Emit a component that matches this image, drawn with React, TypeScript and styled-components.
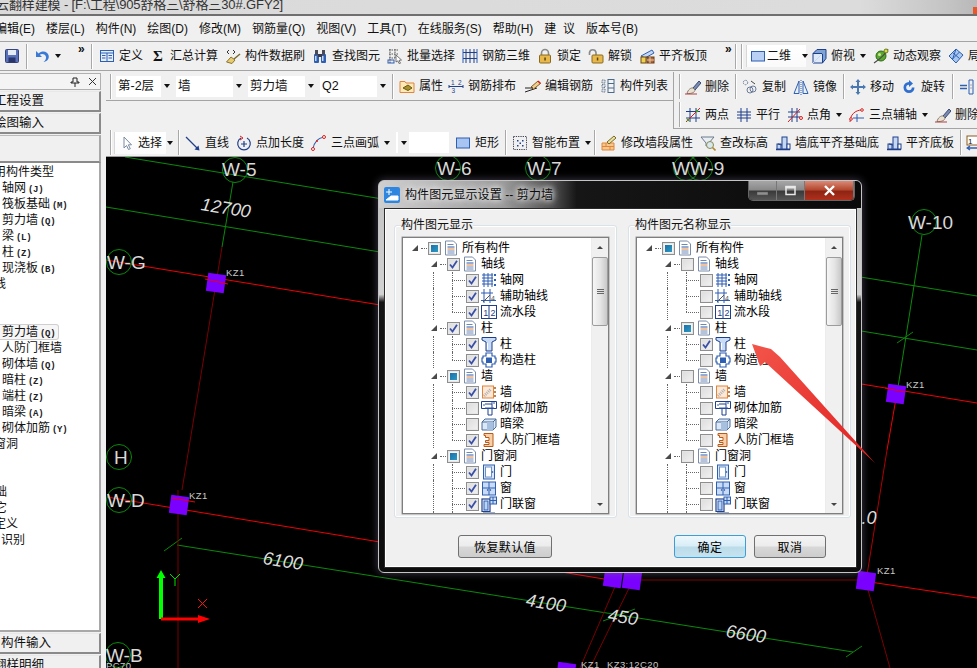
import React from 'react';
import styled, { createGlobalStyle } from 'styled-components';

const FONT = '"Liberation Sans", "Noto Sans CJK SC", sans-serif';

const Global = createGlobalStyle`
  html, body { margin: 0; padding: 0; background: #f0f0f0; overflow: hidden; }
  #root { width: 977px; height: 668px; }
`;

const Page = styled.div`
  position: relative; width: 977px; height: 668px; overflow: hidden;
  background: #f0f0f0; color: #111; font: 12px/16px ${FONT};
  display: flex; flex-direction: column;
`;
const TitleBar = styled.div`
  position: relative; height: 14px; flex: none; overflow: hidden;
  background: linear-gradient(90deg, #dadada 0, #dcdcdc 88%, #c4c4c4 97%, #b8b8b8 100%);
  border-bottom: 2px solid #6f6f6f; white-space: nowrap;
`;
const TitleText = styled.div`
  margin: -3px 0 0 -4px; font-size: 13px; line-height: 16px; color: #333; letter-spacing: -.12px;
`;
const CornerMark = styled.div`
  position: absolute; right: 0; top: 7px; width: 4px; height: 9px; background: #e8562c;
`;
const MenuBar = styled.div`
  height: 25px; flex: none; display: flex; align-items: center; gap: 11px; white-space: pre;
  border-bottom: 1px solid #a4a4a4;
`;
const MenuItem = styled.span`
  &:first-child { margin-left: -5px; }
`;
const Bar = styled.div<{ $w?: number; $h: number; $bottom?: boolean; $left?: boolean; $right?: boolean }>`
  display: flex; align-items: center; flex: ${p => (p.$w ? 'none' : '1')}; min-width: 0; overflow: hidden;
  width: ${p => (p.$w ? `${p.$w}px` : 'auto')};
  height: ${p => p.$h}px; box-sizing: border-box; white-space: nowrap;
  border-bottom: ${p => (p.$bottom ? '1px solid #a4a4a4' : '0')};
  border-left: ${p => (p.$left ? '1px solid #a4a4a4' : '0')};
  border-right: ${p => (p.$right ? '1px solid #a4a4a4' : '0')};
`;
const BarRow = styled.div`
  display: flex; flex: none;
`;
const Slot = styled.div<{ $w: number }>`
  flex: none; width: ${p => p.$w}px; display: flex; align-items: center; gap: 4px;
`;
const Spacer = styled.div<{ $w: number }>`
  flex: none; width: ${p => p.$w}px;
`;
const Pressed = styled.div<{ $w: number; $pad: number; $gap: number }>`
  flex: none; width: ${p => p.$w}px; height: 22px; box-sizing: border-box; display: flex; align-items: center;
  gap: ${p => p.$gap}px; padding-left: ${p => p.$pad}px; background: linear-gradient(#fff, #fafafa);
  border-left: 1px solid #d8d8d8;
`;
const Divider = styled.div`
  width: 1px; height: 25px; background: #a8a8a8; border-right: 1px solid #fff;
`;
const More = styled.span`
  font: 700 12px/10px ${FONT}; margin: -14px 0 0 2px; letter-spacing: -1px;
`;
const Caret = styled.span<{ $ml?: number }>`
  width: 0; height: 0; flex: none; margin-left: ${p => p.$ml ?? 1}px;
  border-left: 3.5px solid transparent; border-right: 3.5px solid transparent; border-top: 4px solid #111;
`;
const Combo = styled.div<{ $w: number }>`
  flex: none; width: ${p => p.$w}px; height: 21px; box-sizing: border-box; background: #fff; padding-left: 2px;
  display: flex; align-items: center; justify-content: space-between; font-size: 12.5px;
`;
const ComboArrow = styled.div`
  width: 11px; height: 100%; background: #f0f0f0; display: flex; align-items: center; justify-content: center;
  & > span { margin: 0; }
`;
const IconSvg = styled.svg<{ $s?: number }>`
  width: ${p => p.$s ?? 16}px; height: ${p => p.$s ?? 16}px; flex: none; display: block;
`;
const DlgIcon = styled(IconSvg)`
  margin-top: 6px;
`;
const Body = styled.div`
  display: flex; flex: 1; min-height: 0; gap: 5px;
`;

const Sidebar = styled.aside`
  width: 101px; flex: none; display: flex; flex-direction: column; padding-top: 2px; box-sizing: border-box; overflow: hidden;
`;
const DockHead = styled.div`
  height: 15px; flex: none; display: flex; align-items: center; justify-content: flex-end; gap: 8px; padding-right: 3px;
  border: 1px solid #b0b0b0; border-left: 0; background: #f4f4f4;
`;
const DockTab = styled.div<{ $x: number }>`
  height: 21px; flex: none; margin-top: 1px; box-sizing: border-box; line-height: 19px; padding-left: ${p => Math.max(p.$x, 0)}px;
  border: 1px solid #8a8a8a; border-width: 0 2px 2px 0; border-top: 1px solid #e8e8e8; background: #f0f0f0; font-size: 12.5px; overflow: hidden;
  & > span { margin-left: ${p => Math.min(p.$x, 0)}px; display: inline-block; white-space: nowrap; }
`;
const DockGap = styled.div`
  height: 28px; flex: none; margin-top: 1px; border-top: 1px solid #bbb; border-right: 2px solid #a8a8a8; border-bottom: 2px solid #8a8a8a; box-sizing: border-box;
`;
const NavList = styled.div`
  height: 469px; flex: none; box-sizing: border-box; background: #fff; border-right: 2px solid #a8a8a8; border-bottom: 2px solid #a8a8a8; padding-top: 1px; overflow: hidden;
`;
const NavRow = styled.div<{ $x: number; $sel?: boolean }>`
  height: 16px; line-height: 16px; white-space: nowrap; box-sizing: border-box; font-size: 12px;
  padding-left: ${p => (p.$x > 0 ? p.$x : 0)}px; text-indent: ${p => (p.$x < 0 ? p.$x : 0)}px;
  width: ${p => (p.$sel ? '59px' : 'auto')};
  ${p => (p.$sel ? 'background:#f6f6f6;border:1px solid #cfcfcf;border-left:0;border-radius:0 3px 3px 0;line-height:14px;padding-left:2px;' : '')}
`;
const Hotkey = styled.span`
  font: 700 9px/16px "Liberation Mono", monospace; margin-left: 2px; color: #222; letter-spacing: -.3px;
`;
const Main = styled.main`
  flex: 1; min-width: 0; display: flex; flex-direction: column; padding-top: 1px;
`;
const CanvasWrap = styled.div`
  flex: 1; min-height: 0; background: #000; overflow: hidden; border-top: 1px solid #9a9a9a;
`;
const CadSvg = styled.svg`
  display: block; width: 871px; height: 511px;
`;
const AxisLabel = styled.text`
  font: 19px "Liberation Sans", sans-serif; fill: #d8d8d8;
`;
const DimLabel = styled.text`
  font: italic 18px "Liberation Sans", sans-serif; fill: #dcdcdc;
`;
const TagLabel = styled.text`
  font: 9.5px "Liberation Sans", sans-serif; fill: #c8c8c8; letter-spacing: .4px;
`;

const Dialog = styled.section`
  position: absolute; left: 378px; top: 180px; width: 484px; height: 393px; box-sizing: border-box;
  border: 1px solid #c4c4c4; border-radius: 6px; padding: 0 4px 4px 5px; display: flex; flex-direction: column;
  background: linear-gradient(180deg, #c2c2c2 0, #d2d2d2 29%, #141414 31%, #0c0c0c 100%);
  box-shadow: 0 0 9px rgba(120,110,140,.55);
`;
const DlgTitle = styled.header`
  height: 27px; flex: none; margin: 0 -4px 0 -5px; padding: 0 6px 0 5px; display: flex; align-items: flex-start; gap: 5px;
  border-radius: 5px 5px 0 0; overflow: hidden;
  background: linear-gradient(90deg, #cfcfcf 0, #bdbdbd 10%, #9a9a9a 26%, #505050 36%, #161616 41%, #0a0a0a 100%);
`;
const DlgName = styled.div`
  margin-top: 6px; font-size: 12px; line-height: 16px; color: #0d0d0d; letter-spacing: .1px; white-space: pre;
  text-shadow: 0 0 6px #fff, 0 0 6px #ddd, 0 0 10px #ccc;
`;
const DlgBtns = styled.div`
  margin-left: auto; display: flex; height: 19px; border: 1px solid #666; border-top: 0; border-radius: 0 0 5px 5px; overflow: hidden;
`;
const WinBtn = styled.div<{ $w: number; $red?: boolean }>`
  width: ${p => p.$w}px; display: flex; align-items: center; justify-content: center; border-right: 1px solid #777;
  background: ${p => (p.$red
    ? 'linear-gradient(#d98a78 0, #b54a30 45%, #8e2414 55%, #b0301c 100%)'
    : 'linear-gradient(#a6a6a6 0, #8a8a8a 45%, #3a3a3a 55%, #565656 100%)')};
`;
const Client = styled.div`
  flex: 1; min-height: 0; background: #f0f0f0; border: 1px solid #2a2a2a; outline: 0; box-shadow: inset 0 0 0 1px #fff;
  padding: 9px 4px 0 9px; box-sizing: border-box; display: flex; flex-direction: column;
`;
const Groups = styled.div`
  display: flex; gap: 11px;
`;
const Group = styled.fieldset`
  margin: 0; width: 223px; height: 300px; box-sizing: border-box; border: 1px solid #d9e2e8; border-radius: 3px; box-shadow: inset 0 0 0 1px #fff;
  padding: 0 7px 3px; display: flex; min-width: 0;
`;
const Legend = styled.legend`
  padding: 0; margin-left: -1px; font-size: 12px; line-height: 14px; background: #f0f0f0;
`;
const TreeBox = styled.div`
  flex: 1; min-width: 0; display: flex; margin-top: 5px; background: #fff; border: 1px solid #7e7e7e; box-shadow: 0 0 0 .5px #9a9a9a; overflow: hidden;
`;
const TreeRows = styled.div`
  flex: 1; min-width: 0; padding-top: 2px; overflow: hidden;
`;
const TreeRow = styled.div<{ $lv: number; $guide?: boolean }>`
  position: relative; height: 16px; display: flex; align-items: center; padding-left: ${p => p.$lv * 19}px; white-space: nowrap;
  ${p => (p.$guide ? `&::before{content:'';position:absolute;left:30px;top:0;bottom:0;border-left:1px dotted #666;}` : '')}
`;
const Twist = styled.div`
  position: relative; width: 25px; height: 16px; flex: none;
  &::before { content: ''; position: absolute; left: 9px; top: 5px; width: 0; height: 0;
    border-left: 6px solid transparent; border-bottom: 6px solid #4a4a4a; }
  &::after { content: ''; position: absolute; left: 18px; top: 8px; width: 6px; border-top: 1px dotted #666; }
`;
const Elbow = styled.div<{ $last?: boolean }>`
  position: relative; width: 25px; height: 16px; flex: none;
  &::before { content: ''; position: absolute; left: 11px; top: 0; height: ${p => (p.$last ? '8px' : '16px')}; border-left: 1px dotted #666; }
  &::after { content: ''; position: absolute; left: 11px; top: 8px; width: 13px; border-top: 1px dotted #666; }
`;
const Check = styled.div<{ $state: 'on' | 'off' | 'mixed' }>`
  position: relative; width: 13px; height: 13px; flex: none; box-sizing: border-box; border: 1px solid #8e8e8e; margin-right: 2px;
  box-shadow: inset 0 0 0 1px #e6e6e6; display: flex; align-items: center; justify-content: center;
  background: ${p => (p.$state === 'mixed'
    ? 'linear-gradient(135deg, #1f6fa8, #2a9ac4) 2px 2px / 7px 7px no-repeat, #f4f4f4'
    : 'linear-gradient(135deg, #dcdcdc, #f2f2f2)')};
`;
const TreeText = styled.span`
  margin-left: 3px; font-size: 12px; line-height: 16px; color: #000;
`;
const ScrollTrack = styled.div`
  width: 16px; flex: none; display: flex; flex-direction: column; align-items: stretch; background: #f0f0f0; border-left: 1px solid #ececec;
`;
const ScrollArrow = styled.div<{ $down?: boolean }>`
  height: 18px; flex: none; display: flex; align-items: center; justify-content: center;
  &::before { content: ''; width: 0; height: 0; border-left: 3.5px solid transparent; border-right: 3.5px solid transparent;
    ${p => (p.$down ? 'border-top: 3.5px solid #444;' : 'border-bottom: 3.5px solid #444;')} }
`;
const ScrollThumb = styled.div`
  height: 69px; margin: 1px 0 auto; box-sizing: border-box; border: 1px solid #9c9c9c; border-radius: 2px;
  background: linear-gradient(90deg, #f6f6f6, #e4e4e4 55%, #c8c8c8); display: flex; flex-direction: column; align-items: center; justify-content: center; gap: 1px;
`;
const ThumbLine = styled.i`
  display: block; width: 7px; height: 1px; background: #666;
`;
const Footer = styled.div`
  display: flex; padding: 17px 0 0 64px;
`;
const Btn = styled.button<{ $w: number; $focus?: boolean; $ml?: number }>`
  width: ${p => p.$w}px; height: 23px; padding: 0; margin-left: ${p => p.$ml ?? 0}px; box-sizing: border-box; border-radius: 3px; font: 12px ${FONT}; letter-spacing: .4px; color: #000;
  border: 1px solid ${p => (p.$focus ? '#3c9ed4' : '#707070')};
  background: ${p => (p.$focus
    ? 'linear-gradient(#eef8fd 0, #d8edf7 48%, #bcdcea 52%, #c6e2ee 100%)'
    : 'linear-gradient(#f4f4f4 0, #ececec 48%, #d8d8d8 52%, #cdcdcd 100%)')};
`;
const ArrowOverlay = styled.svg`
  position: absolute; left: 0; top: 0; width: 977px; height: 668px; pointer-events: none;
`;

const BL = '#2f5fb0', DB = '#1f3f8c', LB = '#c4d8f4', OR = '#e0853a', RD = '#d62020', GD = '#e8b84a';
const ICONS: Record<string, React.ReactNode> = {
  save: <><rect x="1.5" y="1.5" width="13" height="13" rx="1" fill="#5a70b8" stroke="#34447c" /><rect x="4" y="2" width="8" height="5" fill="#e6ecf6" /><rect x="4.5" y="9.5" width="7" height="5" fill="#28346c" /></>,
  undo: <path d="M2 3v6h6L5.8 6.8c2-1.6 5-.8 6 1.4 .8 2-.2 4.4-2.3 5.8 3.4-.4 5.8-3 5.2-6.2C14 3.600 8.600 1.600 4.600 5.400z" fill="#3a7ad6" />,
  define: <><rect x="1.500" y="2.500" width="13" height="11" fill="#e6eefa" stroke={BL} /><path d="M1.500 5h13M8 5v8.500M3 7.500h3.500M3 10h3.500M9.500 7.500h3.500M9.500 10h3.500" stroke={BL} fill="none" /></>,
  sigma: <text x="8" y="13" textAnchor="middle" fontSize="15" fontWeight="700" fontFamily="Liberation Serif" fill="#111">Σ</text>,
  brush: <><path d="M2 4l2-2M2 4l2 2M8 2l2 2-2 2" stroke="#333" fill="none" /><path d="M15 6L9 11" stroke="#7a6a30" strokeWidth="1.500" /><path d="M6 9l4 3-3 3.500L1.500 14z" fill="#e8cc70" stroke="#8a7430" /></>,
  binoc: <><rect x="2" y="6" width="5" height="9" rx="1" fill={BL} /><rect x="9" y="6" width="5" height="9" rx="1" fill={BL} /><rect x="3" y="2" width="3" height="5" fill="#4a4a58" /><rect x="10" y="2" width="3" height="5" fill="#4a4a58" /><rect x="6" y="6" width="4" height="3" fill="#3a3a48" /><rect x="3" y="8" width="1.500" height="5" fill={LB} /><rect x="10" y="8" width="1.500" height="5" fill={LB} /></>,
  batch: <><path d="M2 2h10M2 6h9M2 10h6M3 1v14M8 1v9" stroke="#555" strokeDasharray="1.500 1" fill="none" /><rect x="1" y="12" width="6" height="3" fill="none" stroke={BL} /><path d="M9 7l5.500 5-2.500.4 1.500 2.800-1.300.5-1.400-2.800L9 14z" fill="#fff" stroke="#555" strokeWidth=".8" /></>,
  rebar: <><path d="M1 4.500h14M1 10.500h14M4 1v14M8 1v14M12 1v14" stroke={DB} fill="none" /><path d="M1 1v14M15 1v14" stroke={BL} fill="none" /></>,
  lock: <><path d="M4.500 7V5a3.500 3.500 0 0 1 7 0v2" fill="none" stroke="#8a8a8a" strokeWidth="1.600" /><rect x="2.500" y="7" width="11" height="8" rx="1" fill={GD} stroke="#8a6a20" /><rect x="7.300" y="9.500" width="1.500" height="3" fill="#5a4210" /></>,
  unlock: <><path d="M1.500 7V4.500a3.300 3.300 0 0 1 6.500 0V7" fill="none" stroke="#8a8a8a" strokeWidth="1.600" /><rect x="4" y="7" width="11" height="8" rx="1" fill={GD} stroke="#8a6a20" /><rect x="8.800" y="9.500" width="1.500" height="3" fill="#5a4210" /></>,
  levelTop: <><path d="M2 8L13 2l2 3-9 5z" fill={LB} stroke={BL} /><rect x="2" y="9" width="5" height="6" fill="#f0d050" stroke="#6a4a10" /><rect x="8" y="9" width="7" height="6" fill="#b06a3a" stroke="#6a3a10" /><path d="M8 12h7M11 9v6" stroke="#e8c8a8" /></>,
  rect2d: <rect x="1.500" y="3.500" width="13" height="9.500" fill="#b8d0f4" stroke={BL} />,
  cube: <><path d="M2 5.500h9.500v9.500H2z" fill="#dfeaf8" stroke={DB} /><path d="M2 5.500L6 1.500h9v9l-3.500 4.500V5.500z" fill="#7fa4d4" stroke={DB} /><path d="M2 15l9.500-9.500" stroke={LB} /></>,
  orbit: <><circle cx="8" cy="8" r="5" fill="#5aa82e" stroke="#2e6a12" /><circle cx="6.500" cy="6.500" r="1.500" fill="#c8e89a" /><path d="M1 15C4 13 12 7 15 1" stroke="#4a4a4a" strokeWidth="1.200" fill="none" /><circle cx="13" cy="3" r="2" fill="#d8e040" stroke="#6a7a20" /></>,
  layers: <><path d="M1 8L8 1l7 6-7 8z" fill="#a8c8f0" stroke={BL} /><path d="M4.500 4.500l7 6M8 1l-3.500 10.500M11.500 4l-7 7" stroke={BL} fill="none" /></>,
  attr: <><path d="M1 3.500h5l1 1.500h8v9.500H1z" fill="#fde8b8" stroke={OR} /><path d="M4 10l5-3 4 3-4 2.500z" fill="#a89030" stroke="#6a5a10" /></>,
  layout: <><text x="3" y="6.500" fontSize="6.500" fill={DB} fontFamily="Liberation Sans">1</text><text x="10" y="6.500" fontSize="6.500" fill={DB} fontFamily="Liberation Sans">2</text><text x="3.500" y="15" fontSize="6.500" fill={DB} fontFamily="Liberation Sans">3</text><path d="M1 8.500h14M1 7v3M15 7v3" stroke={DB} fill="none" /></>,
  edit: <><path d="M0 14l6-2 6-2" stroke="#222" fill="none" /><path d="M6 9l7-6 2.500 2.500-7 5.500z" fill="#f0d090" stroke="#8a5a20" /><path d="M13 3l2.500 2.500" stroke={RD} strokeWidth="1.500" /><path d="M0 10h8" stroke="#222" /></>,
  list: <><path d="M2 2h3v3H2zM2 6.500h3v3H2zM2 11h3v3H2z" fill="#dfe6ee" stroke="#6a7a8a" strokeDasharray="1 .5" /><rect x="8" y="1.500" width="6" height="13" fill="#f4f4f4" stroke="#4a6a8a" /><path d="M8 5.500h6M8 10h6" stroke="#4a6a8a" /></>,
  eraser: <><path d="M8 9l6-7 2 2-6 7z" fill="#7a8ab0" stroke="#3a4a70" /><path d="M2 14.500c1-4 4-6 6-5.500l2 2c0 2-3 4-8 3.500z" fill="#e8e0d0" stroke="#8a8070" /><path d="M0 15h12" stroke="#b04040" /></>,
  copy: <><circle cx="3.500" cy="3.500" r="2.200" fill="none" stroke="#6a7a9a" strokeDasharray="1.500 .8" /><circle cx="8" cy="11" r="3" fill="none" stroke="#6a7a9a" /><circle cx="11" cy="10" r="3" fill="none" stroke="#6a7a9a" /><path d="M9 2l4 3" stroke="#444" /></>,
  mirror: <><path d="M1 14.500L6 2v12.500z" fill="#e8f0fa" stroke={BL} /><path d="M15 14.500L10 2v12.500z" fill="#e8f0fa" stroke={BL} /><path d="M8 1v15" stroke={BL} strokeDasharray="1 1" /></>,
  move: <path d="M8 0l2.500 3H9v4h4V5.500L16 8l-3 2.500V9H9v4h1.500L8 16l-2.500-3H7V9H3v1.500L0 8l3-2.500V7h4V3H5.500z" fill="#4a78b0" />,
  rotate: <path d="M8 3a5.500 5.500 0 1 0 5.500 5.500h-2.700A2.800 2.800 0 1 1 8 5.700V8l4-3.500L8 1z" fill="#2f6fd0" />,
  align: <><path d="M1 6.500h7M1 9.500h7" stroke={BL} strokeWidth="1.300" /><path d="M10 1v14M14 1v14M10 1h4M10 15h4" stroke={BL} fill="none" /><path d="M11.500 6h1M11.500 9h1" stroke="#666" /></>,
  twoPts: <><path d="M5 1v14M11 1v14M1 4.500h14M1 11h14" stroke={DB} fill="none" /><path d="M1 15L15 1" stroke={RD} /><circle cx="3" cy="13" r="1.300" fill="#4a9a20" /><circle cx="12" cy="4" r="1.300" fill="#4a9a20" /></>,
  parallel: <path d="M1 5h14M1 8h14M1 11h14M5 1v14M11 1v14" stroke={DB} fill="none" />,
  angle: <><path d="M5 1v14M10 1v14M1 5h12M1 10h12" stroke={DB} fill="none" /><path d="M1 15L13 2" stroke={RD} /><circle cx="14" cy="11" r="1.500" fill="none" stroke={RD} /></>,
  threeAxis: <><path d="M1 15c0-7 5-12 12-12" stroke={RD} fill="none" /><path d="M8 7v8M4 11h11" stroke={BL} fill="none" /><circle cx="2" cy="12" r="1.300" fill="#fff" stroke={RD} /><circle cx="13" cy="3" r="1.300" fill="#fff" stroke={RD} /></>,
  select: <path d="M5 2v11l2.500-2.500 2 4 1.800-.8-2-3.900H12.500z" fill="#fff" stroke="#7a8aa0" />,
  line: <><path d="M1 2l12 12" stroke={DB} strokeWidth="1.200" /><path d="M14.500 15.500l-1-5-4 4z" fill={DB} /></>,
  ptLen: <><path d="M5 3a6.300 6.300 0 1 0 6 0" fill="none" stroke={DB} strokeWidth="1.200" /><path d="M8 6v6M5 9h6" stroke={DB} strokeWidth="1.200" /><path d="M4 1l3 2-3 2" stroke={RD} fill="none" /></>,
  arc: <><path d="M2 14C3 7 7 3 13 2" stroke={BL} strokeWidth="1.200" fill="none" /><circle cx="2" cy="14" r="1.500" fill="#fff" stroke={RD} /><circle cx="13" cy="2" r="1.500" fill="#fff" stroke={RD} /><circle cx="6" cy="6" r="1" fill={RD} /></>,
  rect: <rect x="1.500" y="3" width="13" height="10" fill="#a8c4f0" stroke={BL} />,
  smart: <><rect x="1.500" y="1.500" width="13" height="13" fill="none" stroke="#445" strokeDasharray="1.300 1" /><path d="M5 5h1.500v1.500H5zM10 5h1.500v1.500H10zM5 10h1.500v1.500H5zM10 10h1.500v1.500H10zM7.500 7.500H9V9H7.500z" fill={DB} /></>,
  modWall: <><path d="M1 8h12v7H1z" fill="#f6c890" stroke={OR} /><path d="M1 11.500h12M5 8v3.500M9 11.500V15" stroke={OR} /><path d="M6 7L13 1l2 2-7 6z" fill="#e8e0a0" stroke="#7a6a20" /></>,
  elevate: <><path d="M1 2h13L9 8v2L6 11V8z" fill="#e8eef4" stroke="#6a7a8a" /><circle cx="10" cy="10" r="3.500" fill="#d8e8f0" stroke="#8a8a50" /><path d="M12.500 12.500L15.500 15.500" stroke="#b08a30" strokeWidth="1.600" /></>,
  wallBase: <><path d="M1 14.500h14" stroke={DB} strokeWidth="1.500" /><rect x="2" y="9" width="4" height="5" fill={LB} stroke={DB} /><rect x="7" y="2" width="5" height="12" fill={LB} stroke={DB} /><path d="M7 10l-4-1" stroke={DB} /><rect x="12" y="9" width="3" height="5" fill="#fff" stroke={DB} /></>,
  num: <><rect x="1" y="1" width="11" height="9" fill="#fff" stroke="#8a5a20" /><text x="2" y="9" fontSize="8" fill="#111" fontFamily="Liberation Sans">1</text><path d="M1 13h10M4 11l-3 2 3 2" stroke={BL} fill="none" strokeWidth="1.300" /></>,
  doc: <><path d="M2.500 1h8l3 3v11h-11z" fill="#fff" stroke="#7a8ca8" /><path d="M4.500 4.500h6M4.500 11h7M4.500 13h7" stroke="#6a88b8" /><path d="M4.500 7h7" stroke="#2a58a8" /><path d="M4.500 9h7" stroke={OR} /></>,
  grid: <><path d="M1 3h11M1 6h11M1 9h11M1 12h11M3 1v14M7 1v14M11 1v14" stroke={BL} fill="none" /><path d="M13 2h2v2h-2zM13 7h2v2h-2zM13 12h2v2h-2z" fill={BL} /></>,
  aux: <><path d="M3 1v14M9 1v14M0 12.500h15M0 5h12" stroke={BL} fill="none" /><path d="M2 14L9 7" stroke="#555" /><text x="10" y="13" fontSize="7" fill="#555" fontFamily="Liberation Sans">4</text></>,
  flow: <><rect x=".5" y="1.500" width="15" height="13" fill="#fff" stroke={DB} /><path d="M8 1.500v13" stroke={DB} /><text x="2.200" y="12" fontSize="9" fill={DB} fontFamily="Liberation Sans">1</text><text x="9.600" y="12" fontSize="9" fill={DB} fontFamily="Liberation Sans">2</text></>,
  column: <><path d="M1 1.500h14v2.500l-4 2v9H5V6L1 4z" fill="#c8dcf6" stroke={DB} /><path d="M6.500 7v6.500" stroke="#fff" /></>,
  gcol: <><path d="M5 1h6v3h3v2h1v4h-1v2h-3v3H5v-3H2v-2H1V6h1V4h3z" fill="#fff" stroke={BL} strokeWidth="1.200" /><path d="M5 5.500h6v5.500H5z" fill={BL} /></>,
  wallI: <><rect x="1.500" y="2" width="11" height="12" fill="#fbe8d8" stroke={OR} /><path d="M3 12l7-7" stroke="#b0b0b0" strokeWidth="3" strokeDasharray="1 1" /><path d="M13 4h2M13 8h2M13 12h2" stroke="#b05a10" strokeWidth="1.300" /></>,
  mason: <><path d="M.5 1.500h15v7h-15z" fill="#fff" stroke={DB} /><path d="M4 4h7v11H7V8" fill="none" stroke={DB} /><path d="M4 8h9M10 3h4M2 5h2" stroke={BL} /></>,
  beam: <><path d="M1 6l3-3h11v8l-3 3H1z" fill="#dce8f6" stroke="#4a6a9a" /><path d="M1 6h11v8M12 6l3-3" fill="none" stroke="#4a6a9a" /><rect x="6" y="6" width="6" height="8" fill="#a8c0e0" /></>,
  civil: <path d="M3 1.500h9v13H3v-2h5v-2H4.500v-2H8v-3H4.500v-2H3z" fill="#f8d0a8" stroke="#b8581a" />,
  door: <><rect x="2.500" y="1" width="11" height="14" fill="#d8e8fa" stroke={BL} /><rect x="4.500" y="3" width="6" height="10" fill="#fff" stroke="#6a90c8" /><circle cx="11.500" cy="8" r=".8" fill={DB} /></>,
  windowI: <><rect x="1.500" y="2" width="13" height="13" fill="#c8dcf8" stroke={BL} /><path d="M8 2v13M1.500 8h13" stroke={BL} /><circle cx="6.500" cy="10" r=".7" fill={DB} /><circle cx="9.500" cy="10" r=".7" fill={DB} /></>,
  doorwin: <><rect x="1" y="3" width="8" height="12.500" fill="#fff" stroke={DB} strokeWidth="1.200" /><rect x="3" y="5" width="4" height="9" fill="#bcd4f4" stroke={BL} /><rect x="9" y="1" width="6.500" height="7" fill="#c8dcf8" stroke={BL} /><path d="M12 1v7M9 4.500h6.500" stroke={BL} /></>,
};

const Icon = ({ n, s }: { n: string; s?: number }) => (
  <IconSvg $s={s} viewBox="0 0 16 16" aria-hidden>{ICONS[n]}</IconSvg>
);

type Item = {
  at: number; i?: string; t?: string; caret?: boolean;
  kind?: 'sep' | 'more' | 'combo' | 'pressed' | 'caret' | 'icon'; w?: number; pad?: number; gap?: number; caretMl?: number;
};

function ToolRow({ origin, end, items }: { origin: number; end: number; items: Item[] }) {
  return (
    <>
      <Spacer $w={items[0].at - origin} />
      {items.map((it, idx) => {
        const next = idx + 1 < items.length ? items[idx + 1].at : end;
        const w = next - it.at;
        if (it.kind === 'sep') return <Slot key={idx} $w={w}><Divider /></Slot>;
        if (it.kind === 'more') return <Slot key={idx} $w={w}><More>»</More></Slot>;
        if (it.kind === 'caret') return <Slot key={idx} $w={w}><Caret /></Slot>;
        if (it.kind === 'combo') return (
          <Slot key={idx} $w={w}>
            <Combo $w={it.w!}>{it.t}<ComboArrow><Caret /></ComboArrow></Combo>
          </Slot>
        );
        if (it.kind === 'pressed') return (
          <Slot key={idx} $w={w}>
            <Pressed $w={it.w!} $pad={it.pad!} $gap={it.gap!}>
              {it.i && <Icon n={it.i} />}
              {it.t}
              {it.caret && <Caret $ml={it.caretMl} />}
            </Pressed>
          </Slot>
        );
        return (
          <Slot key={idx} $w={w}>
            {it.i && <Icon n={it.i} />}
            {it.t}
            {it.caret && <Caret />}
          </Slot>
        );
      })}
    </>
  );
}

const row1: Item[] = [
  { at: 4, i: 'save' }, { at: 26, kind: 'sep' }, { at: 34, i: 'undo', caret: true }, { at: 76, kind: 'more' }, { at: 91, kind: 'sep' },
  { at: 99, i: 'define', t: '定义' }, { at: 150, i: 'sigma', t: '汇总计算' }, { at: 225, i: 'brush', t: '构件数据刷' },
  { at: 312, i: 'binoc', t: '查找图元' }, { at: 387, i: 'batch', t: '批量选择' }, { at: 462, i: 'rebar', t: '钢筋三维' },
  { at: 537, i: 'lock', t: '锁定' }, { at: 588, i: 'unlock', t: '解锁' }, { at: 639, i: 'levelTop', t: '平齐板顶' },
  { at: 723, kind: 'more' }, { at: 735, kind: 'sep' }, { at: 741, kind: 'sep' },
  { at: 746, kind: 'pressed', i: 'rect2d', t: '二维', w: 60, pad: 3, gap: 1, caret: true, caretMl: 10 },
  { at: 811, i: 'cube', t: '俯视', caret: true }, { at: 873, i: 'orbit', t: '动态观察' }, { at: 948, i: 'layers', t: '局部三维' },
];
const row2L: Item[] = [
  { at: 110, kind: 'sep' },
  { at: 116, kind: 'combo', t: '第-2层', w: 56 }, { at: 176, kind: 'combo', t: '墙', w: 68 },
  { at: 248, kind: 'combo', t: '剪力墙', w: 68 }, { at: 320, kind: 'combo', t: 'Q2', w: 68 }, { at: 392, kind: 'sep' },
  { at: 399, i: 'attr', t: '属性' }, { at: 448, i: 'layout', t: '钢筋排布' }, { at: 525, i: 'edit', t: '编辑钢筋' }, { at: 600, i: 'list', t: '构件列表' },
];
const row2R: Item[] = [
  { at: 679, kind: 'sep' }, { at: 685, i: 'eraser', t: '删除' }, { at: 735, kind: 'sep' },
  { at: 742, i: 'copy', t: '复制' }, { at: 793, i: 'mirror', t: '镜像' }, { at: 843, kind: 'sep' },
  { at: 850, i: 'move', t: '移动' }, { at: 901, i: 'rotate', t: '旋转' }, { at: 952, kind: 'sep' }, { at: 959, i: 'align' },
];
const row3: Item[] = [
  { at: 679, kind: 'sep' }, { at: 685, i: 'twoPts', t: '两点' }, { at: 736, i: 'parallel', t: '平行' },
  { at: 787, i: 'angle', t: '点角', caret: true }, { at: 849, i: 'threeAxis', t: '三点辅轴', caret: true }, { at: 935, i: 'eraser', t: '删除' },
];
const row4: Item[] = [
  { at: 110, kind: 'sep' }, { at: 114, kind: 'pressed', i: 'select', t: '选择', w: 52, pad: 4, gap: 3 }, { at: 166, kind: 'caret' }, { at: 178, kind: 'sep' },
  { at: 185, i: 'line', t: '直线' }, { at: 236, i: 'ptLen', t: '点加长度' }, { at: 311, i: 'arc', t: '三点画弧', caret: true },
  { at: 396, kind: 'combo', t: '', w: 53 }, { at: 455, i: 'rect', t: '矩形' }, { at: 505, kind: 'sep' },
  { at: 512, i: 'smart', t: '智能布置', caret: true }, { at: 594, kind: 'sep' }, { at: 601, i: 'modWall', t: '修改墙段属性' },
  { at: 700, i: 'elevate', t: '查改标高' }, { at: 775, i: 'wallBase', t: '墙底平齐基础底' }, { at: 886, i: 'wallBase', t: '平齐底板' },
  { at: 960, kind: 'sep' }, { at: 966, i: 'num' },
];

const menus = ['编辑(E)', '楼层(L)', '构件(N)', '绘图(D)', '修改(M)', '钢筋量(Q)', '视图(V)', '工具(T)', '在线服务(S)', '帮助(H)', '建  议', '版本号(B)'];

type Nav = { t?: string; k?: string; x?: number; sel?: boolean };
const nav: Nav[] = [
  { t: '常用构件类型', x: -18 }, { t: '轴网', k: '(J)', x: 2 }, { t: '筏板基础', k: '(M)', x: 2 }, { t: '剪力墙', k: '(Q)', x: 2 },
  { t: '梁', k: '(L)', x: 2 }, { t: '柱', k: '(Z)', x: 2 }, { t: '现浇板', k: '(B)', x: 2 }, { t: '轴线', x: -18 }, {}, {},
  { t: '剪力墙', k: '(Q)', x: 2, sel: true }, { t: '人防门框墙', x: 2 }, { t: '砌体墙', k: '(Q)', x: 2 }, { t: '暗柱', k: '(Z)', x: 2 },
  { t: '端柱', k: '(Z)', x: 2 }, { t: '暗梁', k: '(A)', x: 2 }, { t: '砌体加筋', k: '(Y)', x: 2 }, { t: '门窗洞', x: -18 }, {}, {},
  { t: '基础', x: -17 }, { t: '其它', x: -17 }, { t: '自定义', x: -18 }, { t: '识别', x: 1 },
];

type C = 'on' | 'off' | 'mixed';
type Node = { lv: number; t: string; i: string; last?: boolean };
const nodes: Node[] = [
  { lv: 0, t: '所有构件', i: 'doc' },
  { lv: 1, t: '轴线', i: 'doc' }, { lv: 2, t: '轴网', i: 'grid' }, { lv: 2, t: '辅助轴线', i: 'aux' }, { lv: 2, t: '流水段', i: 'flow', last: true },
  { lv: 1, t: '柱', i: 'doc' }, { lv: 2, t: '柱', i: 'column' }, { lv: 2, t: '构造柱', i: 'gcol', last: true },
  { lv: 1, t: '墙', i: 'doc' }, { lv: 2, t: '墙', i: 'wallI' }, { lv: 2, t: '砌体加筋', i: 'mason' }, { lv: 2, t: '暗梁', i: 'beam' }, { lv: 2, t: '人防门框墙', i: 'civil', last: true },
  { lv: 1, t: '门窗洞', i: 'doc' }, { lv: 2, t: '门', i: 'door' }, { lv: 2, t: '窗', i: 'windowI' }, { lv: 2, t: '门联窗', i: 'doorwin' }, { lv: 2, t: '', i: 'door' },
];
const leftStates: C[] = ['mixed', 'on', 'on', 'on', 'on', 'on', 'on', 'on', 'mixed', 'on', 'off', 'off', 'on', 'mixed', 'on', 'on', 'on', 'on'];
const rightStates: C[] = ['mixed', 'off', 'off', 'off', 'off', 'mixed', 'on', 'off', 'off', 'off', 'off', 'off', 'off', 'off', 'off', 'off', 'off', 'off'];

const Tick = () => (
  <IconSvg $s={9} viewBox="0 0 9 9" aria-hidden><path d="M1 4.500l2.500 3L8 .8" fill="none" stroke="#3a50a8" strokeWidth="1.800" /></IconSvg>
);

const Tree = ({ title, states }: { title: string; states: C[] }) => (
  <Group>
    <Legend>{title}</Legend>
    <TreeBox>
      <TreeRows>
        {nodes.map((n, i) => (
          <TreeRow key={i} $lv={n.lv} $guide={n.lv === 2}>
            {n.lv === 2 ? <Elbow $last={n.last} /> : <Twist />}
            <Check $state={states[i]}>{states[i] === 'on' && <Tick />}</Check>
            <Icon n={n.i} />
            <TreeText>{n.t}</TreeText>
          </TreeRow>
        ))}
      </TreeRows>
      <ScrollTrack>
        <ScrollArrow />
        <ScrollThumb><ThumbLine /><ThumbLine /><ThumbLine /></ScrollThumb>
        <ScrollArrow $down />
      </ScrollTrack>
    </TreeBox>
  </Group>
);

const G = '#0a8a0a', R = '#f00000', DR = '#7a0000';
type L = [number, number, number, number, string, number?];
const cadLines: L[] = [
  [125, 157, 977, 296, G], [106, 207, 977, 350, G],
  [106, 260, 977, 403, R], [107, 497, 610, 580, R], [633, 580, 868, 580, DR], [870, 582, 977, 598, R],
  [177, 545, 853, 652, G], [164, 551, 182, 538, G], [603, 621, 635, 609, G], [846, 657, 862, 646, G], [897, 343, 913, 332, G],
  [233, 182, 222, 247, G], [222, 247, 182, 490, DR], [178, 490, 178, 668, DR],
  [922, 235, 898, 387, G], [898, 387, 887, 450, R], [887, 450, 867, 575, '#b00000'], [868, 590, 890, 668, DR],
  [617, 582, 580, 668, DR], [633, 580, 590, 668, DR],
];
const circles: [number, number][] = [[235, 170], [448, 168], [538, 168], [686, 168], [700, 168], [924, 222], [119, 262], [119, 457], [119, 500], [118, 655]];
const axisText: [string, number, number][] = [['W-5', 222, 176], ['W-6', 437, 175], ['W-7', 527, 175], ['WW-9', 672, 175], ['W-10', 908, 229], ['W-G', 107, 269], ['H', 114, 464], ['W-D', 107, 507], ['W-B', 106, 662]];
const dims: [string, number, number, number][] = [['12700', 225, 214, 9], ['6100', 282, 567, 9], ['4100', 545, 609, 9], ['450', 622, 623, 9], ['6600', 745, 640, 9], ['.0', 869, 524, 0]];
const tags: [string, number, number][] = [['KZ1', 226, 276], ['KZ1', 189, 499], ['KZ1', 906, 388], ['KZ1', 877, 574], ['KZ1', 581, 668], ['KZ3:12C20', 607, 668], ['PC70', 106, 669]];
const cols: [number, number][] = [[216, 283], [179, 505], [896, 394], [866, 581], [613, 578], [632, 580], [566, 672]];

const CadCanvas = () => (
  <CanvasWrap>
    <CadSvg viewBox="106 157 871 511">
      {cadLines.map((l, i) => <line key={i} x1={l[0]} y1={l[1]} x2={l[2]} y2={l[3]} stroke={l[4]} strokeWidth="1" />)}
      {circles.map((c, i) => <circle key={i} cx={c[0]} cy={c[1]} r="12.500" fill="none" stroke={G} strokeWidth="1" />)}
      {cols.map((c, i) => <rect key={i} x={c[0] - 9} y={c[1] - 9} width="18" height="18" fill="#7a00ff" transform={`rotate(8 ${c[0]} ${c[1]})`} />)}
      <line x1="172" y1="498" x2="195" y2="502" stroke={R} />
      <line x1="205" y1="279" x2="228" y2="284" stroke={R} />
      <line x1="885" y1="388" x2="905" y2="392" stroke={R} />
      {axisText.map(([t, x, y], i) => <AxisLabel key={i} x={x} y={y}>{t}</AxisLabel>)}
      {dims.map(([t, x, y, r], i) => <DimLabel key={i} x={x} y={y} textAnchor="middle" transform={`rotate(${r} ${x} ${y})`}>{t}</DimLabel>)}
      {tags.map(([t, x, y], i) => <TagLabel key={i} x={x} y={y}>{t}</TagLabel>)}
      <path d="M159 619V578h-2.500L161 570l4.500 8H163v41z" fill="#00ff00" />
      <path d="M161 617.500h37V615l12 4-12 4v-2.500h-37z" fill="#ff0000" />
      <path d="M170 574l5 5 5-5M175 579v7" stroke="#00e000" fill="none" />
      <path d="M198 599l9 9M207 599l-9 9" stroke="#ff1010" fill="none" />
    </CadSvg>
  </CanvasWrap>
);

export default function App() {
  return (
    <Page>
      <Global />
      <TitleBar>
        <TitleText>云翻样建模 - [F:\工程\905舒格三\舒格三30#.GFY2]</TitleText>
        <CornerMark />
      </TitleBar>
      <MenuBar>{menus.map(m => <MenuItem key={m}>{m}</MenuItem>)}</MenuBar>
      <BarRow><Bar $h={29} $bottom><ToolRow origin={0} end={977} items={row1} /></Bar></BarRow>
      <Body>
        <Sidebar>
          <DockHead>
            <IconSvg $s={10} viewBox="0 0 10 10" aria-hidden><path d="M3 1h4v4h2v1H1V5h2zM5 6v4" stroke="#222" fill="none" /></IconSvg>
            <IconSvg $s={9} viewBox="0 0 9 9" aria-hidden><path d="M1 1l7 7M8 1L1 8" stroke="#333" /></IconSvg>
          </DockHead>
          <DockTab $x={-6}><span>工程设置</span></DockTab>
          <DockTab $x={-6}><span>绘图输入</span></DockTab>
          <DockGap />
          <NavList>
            {nav.map((n, i) => (
              <NavRow key={i} $x={n.x ?? 0} $sel={n.sel}>{n.t}{n.k && <Hotkey>{n.k}</Hotkey>}</NavRow>
            ))}
          </NavList>
          <DockTab $x={1}><span>构件输入</span></DockTab>
          <DockTab $x={-6}><span>翻样明细</span></DockTab>
        </Sidebar>
        <Main>
          <BarRow>
            <Bar $w={568} $h={29} $bottom $right><ToolRow origin={106} end={674} items={row2L} /></Bar>
            <Bar $h={29}><ToolRow origin={674} end={977} items={row2R} /></Bar>
          </BarRow>
          <BarRow>
            <Spacer $w={567} />
            <Bar $h={28} $bottom $left><ToolRow origin={674} end={977} items={row3} /></Bar>
          </BarRow>
          <BarRow><Bar $h={27}><ToolRow origin={106} end={977} items={row4} /></Bar></BarRow>
          <CadCanvas />
        </Main>
      </Body>
      <Dialog>
        <DlgTitle>
          <DlgIcon $s={16} viewBox="0 0 16 16" aria-hidden>
            <rect width="16" height="16" rx="2" fill="#2f86e0" />
            <path d="M2 5h6M5 2v6M2 13l5-4h7v4z" stroke="#fff" fill="#fff" />
          </DlgIcon>
          <DlgName>构件图元显示设置 -- 剪力墙</DlgName>
          <DlgBtns>
            <WinBtn $w={27}><IconSvg $s={11} viewBox="0 0 11 11" aria-hidden><rect x="0" y="7" width="11" height="3" fill="#8f8f8f" stroke="#555" strokeWidth=".5" /></IconSvg></WinBtn>
            <WinBtn $w={27}><IconSvg $s={11} viewBox="0 0 11 11" aria-hidden><rect x="1" y="1.500" width="9" height="8" fill="none" stroke="#e8e8e8" strokeWidth="1.500" /><rect x=".5" y="1" width="10" height="2.500" fill="#e8e8e8" /></IconSvg></WinBtn>
            <WinBtn $w={48} $red><IconSvg $s={11} viewBox="0 0 11 11" aria-hidden><path d="M1 1l9 9M10 1l-9 9" stroke="#fff" strokeWidth="2.400" /></IconSvg></WinBtn>
          </DlgBtns>
        </DlgTitle>
        <Client>
          <Groups>
            <Tree title="构件图元显示" states={leftStates} />
            <Tree title="构件图元名称显示" states={rightStates} />
          </Groups>
          <Footer>
            <Btn $w={94}>恢复默认值</Btn>
            <Btn $w={72} $focus $ml={122}>确定</Btn>
            <Btn $w={72} $ml={8}>取消</Btn>
          </Footer>
        </Client>
      </Dialog>
      <ArrowOverlay viewBox="0 0 977 668" aria-hidden>
        <defs>
          <linearGradient id="arrowFill" x1="752" y1="344" x2="875" y2="463" gradientUnits="userSpaceOnUse">
            <stop offset="0" stopColor="#f2554a" />
            <stop offset="1" stopColor="#e02020" />
          </linearGradient>
        </defs>
        <path d="M752 344L771 349 780 357 875 463 765 362 760 366z" fill="url(#arrowFill)" />
      </ArrowOverlay>
    </Page>
  );
}
